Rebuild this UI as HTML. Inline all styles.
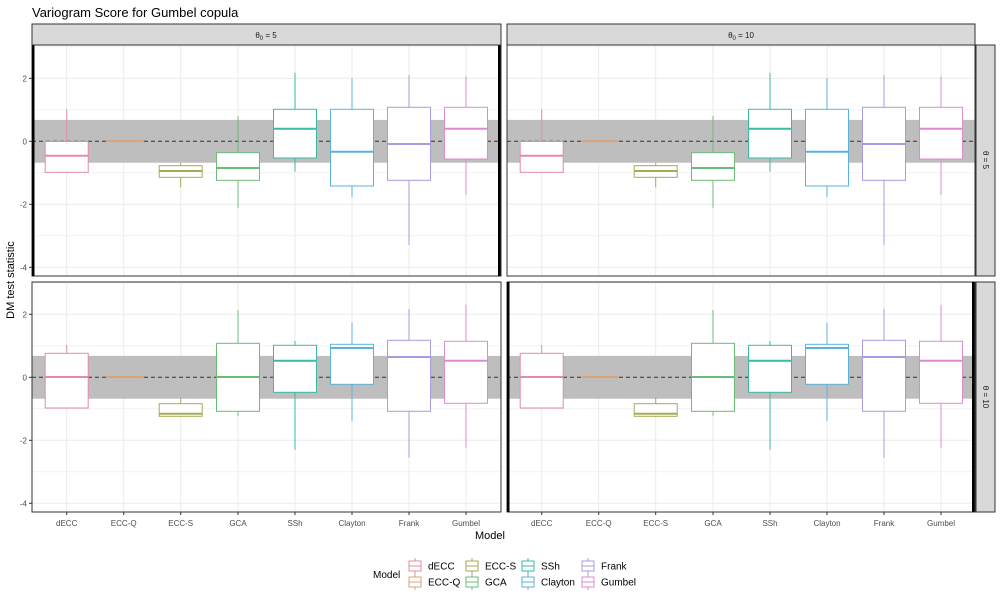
<!DOCTYPE html>
<html><head><meta charset="utf-8"><style>
html,body{margin:0;padding:0;background:#fff;width:1000px;height:600px;overflow:hidden}
svg{display:block;font-family:"Liberation Sans",Arial,sans-serif}
</style></head><body>
<svg id="s" width="1000" height="600" viewBox="0 0 1000 600" xmlns="http://www.w3.org/2000/svg">
<text x="32" y="17" font-size="13" fill="#000">Variogram Score for Gumbel copula</text>
<text transform="translate(14,280) rotate(-90)" font-size="11" text-anchor="middle" fill="#000">DM test statistic</text>
<text x="490" y="539" font-size="11" text-anchor="middle" fill="#000">Model</text>
<g id="g"></g>
<text x="373" y="578" font-size="10" fill="#000">Model</text>
</svg>
<script>
(function(){
var g=document.getElementById('g');var h='';
var cols=['#e58ba2','#d9a478','#a8aa58','#6cbb78','#3bbaa6','#5cb2da','#a99be2','#db8bd0'];
var names=['dECC','ECC-Q','ECC-S','GCA','SSh','Clayton','Frank','Gumbel'];
var cx=[66.7,123.7,180.7,238,295,352,409,466];
var topD=[[109.3,141.5,155.7,172.3,null],[null,141,141,141,null],[162.7,165.7,171,177.3,187.3],[116,152.7,168,180.3,207.7],[72.7,109.3,128.7,158,171.7],[78.3,109.3,151.7,186,196.7],[75,107.3,144,180.3,245],[76.3,107.3,128.7,159,194.7]];
var botD=[[345,353.3,377,408,null],[null,377,377,377,null],[397.3,403.7,413.7,416.3,null],[310,343.3,377,411.3,415.7],[341,345.3,360.7,392.3,449.7],[322.7,344.3,348,384.3,420.7],[309,340.3,357,411.3,457.7],[304.7,341.3,360.7,403.3,447.7]];
function panel(x0,x1,y0,y1,z,data,thick){
 var u=31.5;
 h+='<rect x="'+x0+'" y="'+y0+'" width="'+(x1-x0)+'" height="'+(y1-y0)+'" fill="#fff"/>';
 for(var v=-4;v<=3;v++){var y=z-v*u;if(y>y0&&y<y1)h+='<line x1="'+x0+'" x2="'+x1+'" y1="'+y+'" y2="'+y+'" stroke="#ebebeb" stroke-width="'+(v%2==0?1:0.6)+'"/>';}
 var off=x0-32;
 cx.forEach(function(c){h+='<line x1="'+(c+off)+'" x2="'+(c+off)+'" y1="'+y0+'" y2="'+y1+'" stroke="#ebebeb"/>';});
 h+='<rect x="'+x0+'" y="'+(z-0.68*u)+'" width="'+(x1-x0)+'" height="'+(1.36*u)+'" fill="#bebebe"/>';
 h+='<line x1="'+x0+'" x2="'+x1+'" y1="'+z+'" y2="'+z+'" stroke="#333" stroke-dasharray="4,3"/>';
 data.forEach(function(d,i){var c=cx[i]+off,col=cols[i];
  if(i==1){h+='<line x1="'+(c-17)+'" x2="'+(c+20)+'" y1="'+d[2]+'" y2="'+d[2]+'" stroke="'+col+'" stroke-width="2"/>';return;}
  if(d[0]!=null)h+='<line x1="'+c+'" x2="'+c+'" y1="'+d[0]+'" y2="'+d[1]+'" stroke="'+col+'"/>';
  if(d[4]!=null)h+='<line x1="'+c+'" x2="'+c+'" y1="'+d[3]+'" y2="'+d[4]+'" stroke="'+col+'"/>';
  h+='<rect x="'+(c-21.5)+'" y="'+d[1]+'" width="43" height="'+(d[3]-d[1])+'" fill="#fff" stroke="'+col+'"/>';
  h+='<line x1="'+(c-21.5)+'" x2="'+(c+21.5)+'" y1="'+d[2]+'" y2="'+d[2]+'" stroke="'+col+'" stroke-width="2"/>';
 });
 h+='<rect x="'+x0+'" y="'+y0+'" width="'+(x1-x0)+'" height="'+(y1-y0)+'" fill="none" stroke="#333" stroke-width="1"/>';
 if(thick){h+='<rect x="'+(x0)+'" y="'+y0+'" width="2.5" height="'+(y1-y0)+'" fill="#000"/><rect x="'+(x1-3)+'" y="'+y0+'" width="2.5" height="'+(y1-y0)+'" fill="#000"/>';}
 if(x0<100){[2,0,-2,-4].forEach(function(v){var y=z-v*u;h+='<text x="27" y="'+(y+3)+'" font-size="8" text-anchor="end" fill="#4d4d4d">'+(v<0?'-'+(-v):v)+'</text><line x1="29" x2="'+x0+'" y1="'+y+'" y2="'+y+'" stroke="#333"/>';});}
}
panel(32,501,45,276,141.3,topD,true);
panel(507,975,45,276,141.3,topD,false);
panel(32,501,282,512,377.3,botD,false);
panel(507,975,282,512,377.3,botD,true);
h+='<rect x="32" y="24" width="469" height="21" fill="#d9d9d9" stroke="#333"/><rect x="507" y="24" width="468" height="21" fill="#d9d9d9" stroke="#333"/>';
h+='<text x="266" y="38" font-size="8" text-anchor="middle" fill="#1a1a1a">θ<tspan font-size="6" dy="2">0</tspan><tspan dy="-2"> = 5</tspan></text>';
h+='<text x="741" y="38" font-size="8" text-anchor="middle" fill="#1a1a1a">θ<tspan font-size="6" dy="2">0</tspan><tspan dy="-2"> = 10</tspan></text>';
h+='<rect x="976" y="45" width="19" height="231" fill="#d9d9d9" stroke="#333"/><rect x="976" y="282" width="19" height="230" fill="#d9d9d9" stroke="#333"/>';
h+='<text transform="translate(983,160) rotate(90)" font-size="8" text-anchor="middle" fill="#1a1a1a">θ = 5</text>';
h+='<text transform="translate(983,397) rotate(90)" font-size="8" text-anchor="middle" fill="#1a1a1a">θ = 10</text>';
[0,475].forEach(function(o){cx.forEach(function(c,i){h+='<line x1="'+(c+o)+'" x2="'+(c+o)+'" y1="512" y2="515" stroke="#333"/><text x="'+(c+o)+'" y="526" font-size="8" text-anchor="middle" fill="#4d4d4d">'+names[i]+'</text>';});});
var lx=[[409,428],[466,485],[522,541],[582,601]];
for(var i=0;i<8;i++){var col=Math.floor(i/2),row=i%2;var kx=lx[col][0],ky=row?582:566;
 h+='<line x1="'+(kx+6)+'" x2="'+(kx+6)+'" y1="'+(ky-8)+'" y2="'+(ky+8)+'" stroke="'+cols[i]+'"/><rect x="'+kx+'" y="'+(ky-5)+'" width="12" height="10" fill="#fff" stroke="'+cols[i]+'"/><line x1="'+kx+'" x2="'+(kx+12)+'" y1="'+ky+'" y2="'+ky+'" stroke="'+cols[i]+'"/>';
 h+='<text x="'+lx[col][1]+'" y="'+(ky+3.5)+'" font-size="10" fill="#000">'+names[i]+'</text>';}
g.innerHTML=h;
})();
</script>
</body></html>
